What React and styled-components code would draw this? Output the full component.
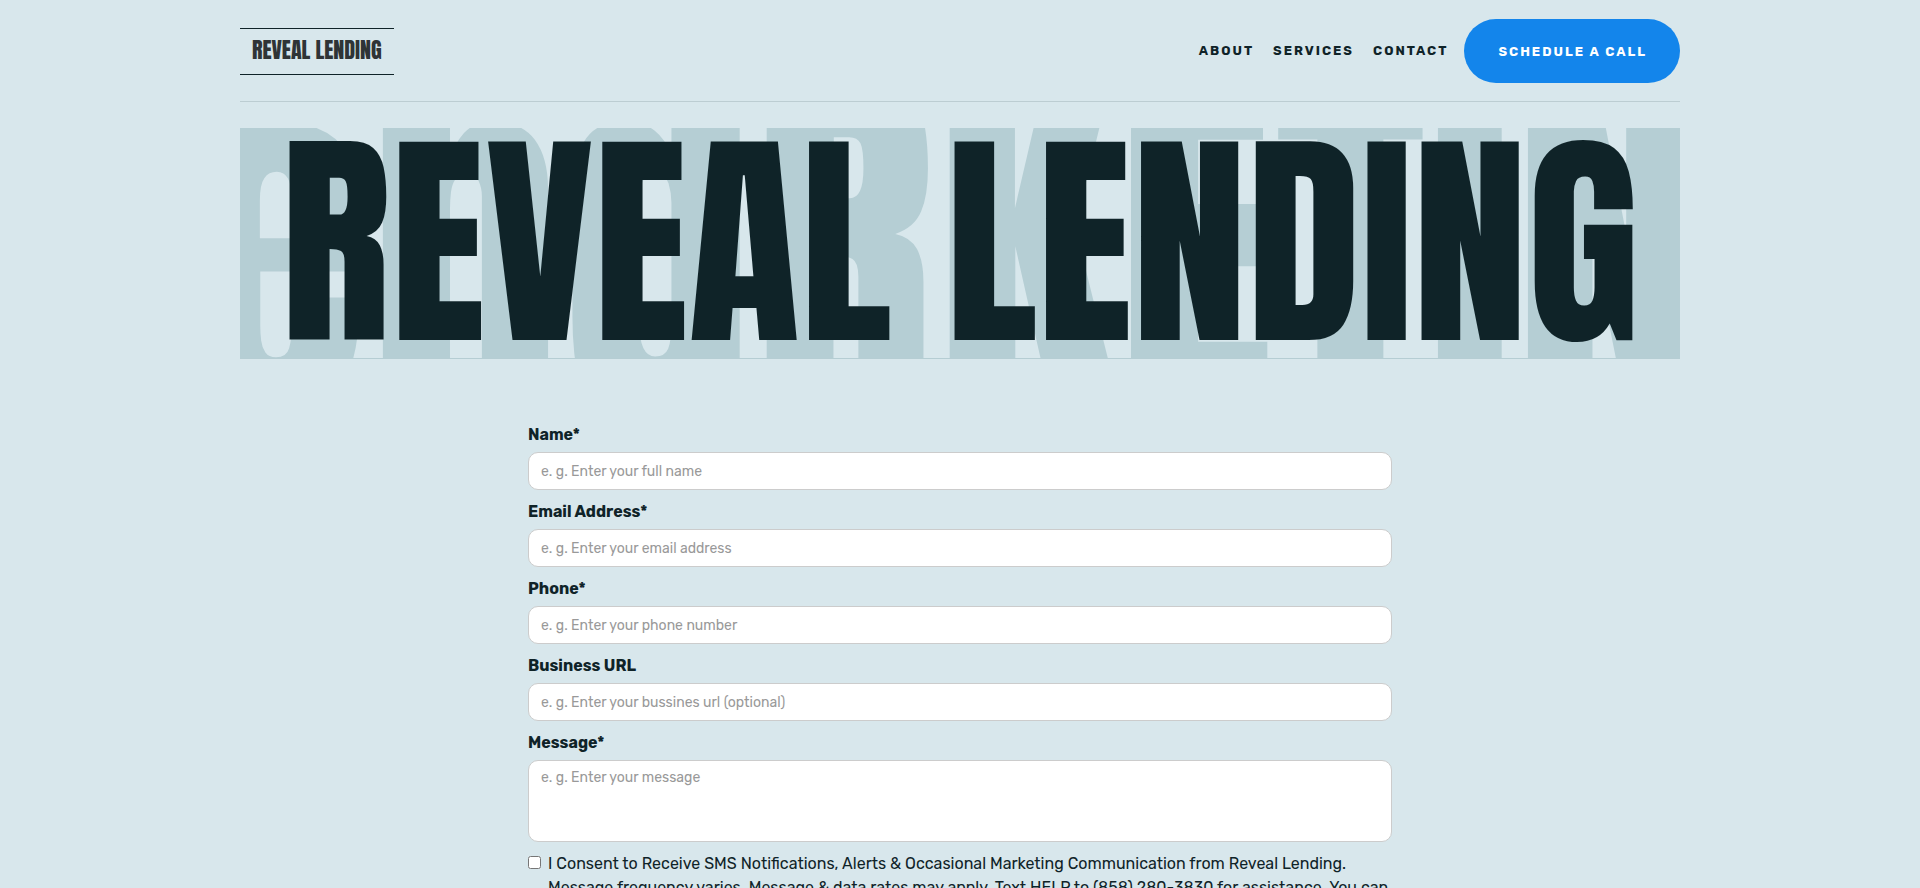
import React from 'react';
import styled, { createGlobalStyle } from 'styled-components';

const ink = '#0f2328';
const display = '"Anton", "Oswald", "Roboto Condensed", sans-serif';

const GlobalStyle = createGlobalStyle`
  *, *::before, *::after { box-sizing: border-box; }
  body {
    margin: 0;
    background: #d8e7ec;
    color: ${ink};
    font: 400 16px/24px "Rubik", "Roboto", sans-serif;
  }
`;

const Page = styled.div`
  width: 75%;
  margin: 0 auto;
`;

const Header = styled.header`
  display: flex;
  align-items: center;
  justify-content: space-between;
  height: 102px;
  border-bottom: 1px solid #bccdd2;
`;

const Logo = styled.a`
  margin-top: 2px;
  padding: 0 12px 4px;
  border-top: 1px solid ${ink};
  border-bottom: 1px solid ${ink};
  color: #2f3436;
  font: 400 22px/41px ${display};
  text-decoration: none;
  text-transform: uppercase;
`;

const Nav = styled.nav`
  display: flex;
  align-items: center;
  gap: 16px;
`;

const NavLinks = styled.div`
  display: flex;
  gap: 19px;
`;

const NavLink = styled.a`
  color: ${ink};
  font-size: 13px;
  font-weight: 700;
  letter-spacing: 2px;
  text-decoration: none;
  text-transform: uppercase;
`;

const CallButton = styled.button`
  height: 64px;
  padding: 2px 33px 0 34px;
  border: 0;
  border-radius: 32px;
  background: #1385eb;
  color: #fff;
  font: 700 13px/24px "Rubik", "Roboto", sans-serif;
  letter-spacing: 2px;
  text-transform: uppercase;
`;

const Banner = styled.section`
  position: relative;
  display: flex;
  justify-content: center;
  margin-top: 26px;
  border-bottom: 1px solid #b5cdd3;
  overflow: hidden;
`;

const Backdrop = styled.span`
  position: absolute;
  inset: 0;
  display: flex;
  align-items: center;
  justify-content: center;
  color: #b5ced4;
  font: 400 20vw/1 ${display};
  white-space: nowrap;
`;

const Title = styled.h1`
  position: relative;
  margin: 0;
  font: 400 12vw/1 ${display};
  text-transform: uppercase;
  white-space: nowrap;
`;

const Form = styled.form`
  width: 60%;
  margin: 64px auto 0;
`;

const Label = styled.label`
  display: block;
  margin-bottom: 5px;
  font-weight: 700;
`;

const Input = styled.input`
  display: block;
  width: 100%;
  height: 38px;
  margin-bottom: 10px;
  padding: 8px 12px;
  border: 1px solid #ccc;
  border-radius: 10px;
  background: #fff;
  color: #333;
  font: 400 14px/18px "Rubik", "Roboto", sans-serif;
  resize: none;
  &::placeholder { color: #999; opacity: 1; }
`;

const TextArea = styled(Input)`
  height: 82px;
`;

const Consent = styled.label`
  display: flex;
  align-items: flex-start;
  gap: 7px;
`;

const Checkbox = styled.input`
  flex: none;
  width: 13px;
  height: 13px;
  margin: 4px 0 0;
`;

const fields = [
  { id: 'name', label: 'Name*', type: 'text', hint: 'e. g. Enter your full name' },
  { id: 'email', label: 'Email Address*', type: 'email', hint: 'e. g. Enter your email address' },
  { id: 'phone', label: 'Phone*', type: 'tel', hint: 'e. g. Enter your phone number' },
  { id: 'url', label: 'Business URL', type: 'text', hint: 'e. g. Enter your bussines url (optional)' },
];

export default function App() {
  return (
    <>
      <GlobalStyle />
      <Page>
        <Header>
          <Logo href="#">Reveal Lending</Logo>
          <Nav>
            <NavLinks>
              <NavLink href="#about">About</NavLink>
              <NavLink href="#services">Services</NavLink>
              <NavLink href="#contact">Contact</NavLink>
            </NavLinks>
            <CallButton type="button">Schedule a call</CallButton>
          </Nav>
        </Header>
        <Banner>
          <Backdrop aria-hidden="true">LendRKETING</Backdrop>
          <Title>Reveal Lending</Title>
        </Banner>
        <Form>
          {fields.map((f) => (
            <React.Fragment key={f.id}>
              <Label htmlFor={f.id}>{f.label}</Label>
              <Input id={f.id} type={f.type} placeholder={f.hint} />
            </React.Fragment>
          ))}
          <Label htmlFor="message">Message*</Label>
          <TextArea as="textarea" id="message" placeholder="e. g. Enter your message" />
          <Consent>
            <Checkbox type="checkbox" />
            <span>
              I Consent to Receive SMS Notifications, Alerts &amp; Occasional Marketing Communication from
              Reveal Lending. Message frequency varies. Message &amp; data rates may apply. Text HELP to (858)
              280-3830 for assistance. You can
            </span>
          </Consent>
        </Form>
      </Page>
    </>
  );
}
